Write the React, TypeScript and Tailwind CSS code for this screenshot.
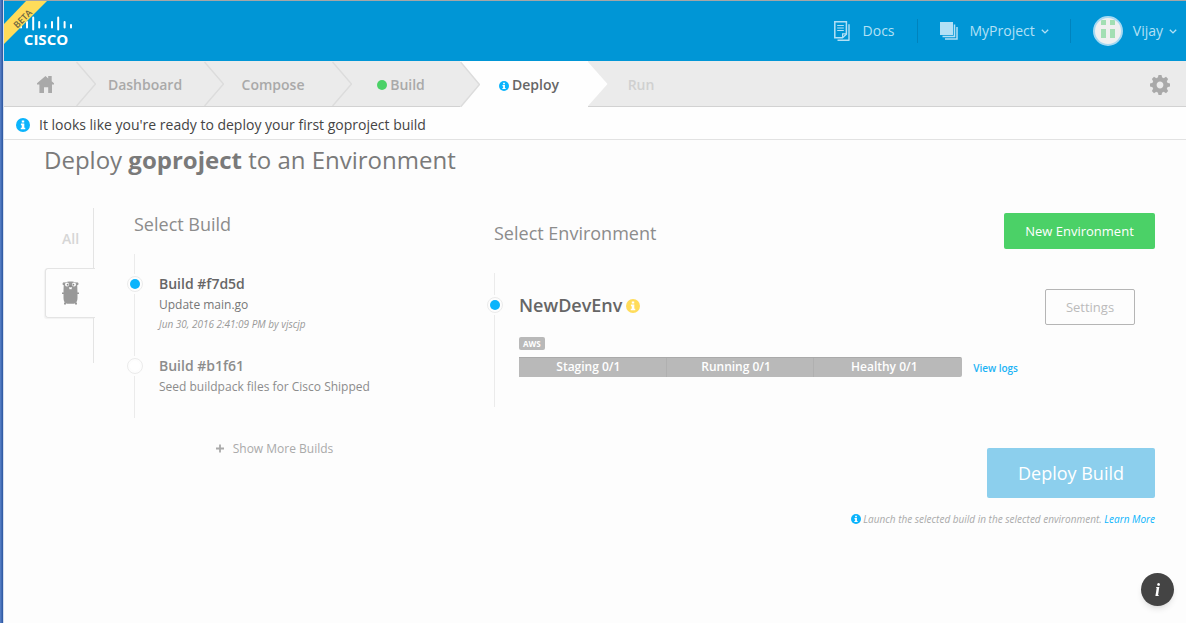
import React from "react";

type IconProps = { className?: string };

function InfoIcon({ className = "" }: IconProps) {
  return (
    <svg viewBox="0 0 16 16" className={"shrink-0 " + className} aria-hidden="true">
      <circle cx="8" cy="8" r="8" fill="currentColor" />
      <path d="M6.6 2.8h2.8v2.4H6.6zM5.6 6.4h3.9v4.6h1.1v1.9h-5.2V11h1.2V8.2h-1z" fill="#fff" />
    </svg>
  );
}

function HomeIcon() {
  return (
    <svg viewBox="0 0 17 17" className="h-[17px] w-[17px]" aria-hidden="true">
      <path
        d="M8.5 0 0 7.2V8.4h2.4V17H7v-5.8h4.2V17h3.8V8.4h2V7.2l-2.3-1.9V0h-3.5v2.4z"
        fill="#a9a9a9"
      />
    </svg>
  );
}

function GearIcon() {
  const teeth = [0, 45, 90, 135, 180, 225, 270, 315];
  return (
    <svg viewBox="-10 -10 20 20" className="h-5 w-5" aria-hidden="true">
      <circle r="5.6" fill="none" stroke="#a9a9a9" strokeWidth="4.4" />
      {teeth.map((a) => (
        <path key={a} d="M-2.3 -7 -1.5 -10h3L2.3 -7z" fill="#a9a9a9" transform={`rotate(${a})`} />
      ))}
    </svg>
  );
}

function DocsIcon() {
  return (
    <svg viewBox="0 0 17 20" className="h-5 w-[17px]" fill="none" stroke="#b3e0f5" aria-hidden="true">
      <path d="M.8.8h11.6v12.4l-4 3.6H.8z" strokeWidth="1.5" />
      <path d="M12.4 12.8H8.6v4" strokeWidth="1.2" />
      <path d="M3.2 4.5h6.6M3.2 7h6.6M3.2 9.5h6.6" strokeWidth="1.2" />
      <path d="M15 3.2v16M3.5 19.2h12" strokeWidth="1.4" />
    </svg>
  );
}

function ProjectIcon() {
  return (
    <svg viewBox="0 0 18 18" className="h-[18px] w-[18px]" aria-hidden="true">
      <path d="M0 0h13v13H0z" fill="#b3e0f5" />
      <path d="M14.5 2.5v12H2.5M17 5v12H5" fill="none" stroke="#b3e0f5" strokeWidth="1.5" />
    </svg>
  );
}

function Caret() {
  return (
    <svg viewBox="0 0 8 5" className="mt-px h-[5px] w-2" aria-hidden="true">
      <path d="M.8.8 4 3.9 7.2.8" fill="none" stroke="#b3e0f5" strokeWidth="1.4" />
    </svg>
  );
}

function Avatar() {
  return (
    <svg viewBox="0 0 30 30" className="h-[30px] w-[30px]" aria-hidden="true">
      <circle cx="15" cy="15" r="14" fill="#f0f0f0" stroke="#a6d9f2" strokeWidth="2" />
      <path d="M9 4h4v5H8V4.6zM17 4h4l1 .6V9h-5zM8 13h5v9H8zM17 13h5v9h-5z" fill="#a3dfb3" />
    </svg>
  );
}

function CiscoBars() {
  return (
    <svg viewBox="0 0 54 15" className="h-[15px] w-[54px]" aria-hidden="true">
      <g stroke="#fff" strokeWidth="2" strokeLinecap="round">
        <path d="M2 9v2.5M8 6v5.5M14.2 1.5v12M20.2 6v5.5M26.6 9v2.5M33 6v5.5M39.2 1.5v12M45.6 6v5.5M52 9v2.5" />
      </g>
    </svg>
  );
}

function BetaRibbon() {
  return (
    <svg viewBox="0 0 44 44" className="absolute left-0 top-0 h-11 w-11">
      <path d="M0 23 22 0h21L0 43z" fill="#ffdc5a" />
      <text
        x="0"
        y="0"
        transform="translate(21 20) rotate(-45)"
        textAnchor="middle"
        className="text-[9px] font-semibold"
        fill="#6b6440"
      >
        BETA
      </text>
    </svg>
  );
}

function GopherIcon() {
  return (
    <svg viewBox="0 0 17 24" className="h-6 w-[17px]" aria-hidden="true">
      <g fill="#999">
        <circle cx="2" cy="2.8" r="1.5" />
        <circle cx="15" cy="2.8" r="1.5" />
        <path d="M3 1.5C5.5 0 11.5 0 14 1.5 15.6 3 15.300 7 15.500 11v6c0 3-1 5-3.500 5.800H5C2.500 22 1.500 20 1.500 17v-6C1.700 7 1.400 3 3 1.500z" />
        <path d="M0 11.500h17v1.500H0zM2 21.500h2v2H2zM13 21.500h2v2h-2z" />
      </g>
      <circle cx="5" cy="3.600" r="2" fill="#fff" />
      <circle cx="12" cy="3.600" r="2" fill="#fff" />
      <circle cx="5.600" cy="3.700" r=".9" fill="#888" />
      <circle cx="11.400" cy="3.700" r=".9" fill="#888" />
      <path d="M7.300 6h2.400v2.200H7.300z" fill="#fff" />
      <circle cx="8.500" cy="5.300" r="1.100" fill="#888" />
    </svg>
  );
}

function StepArrow({
  left,
  right,
  line,
  className = "h-full",
}: {
  left: string;
  right: string;
  line: string;
  className?: string;
}) {
  return (
    <svg viewBox="0 0 20 45" preserveAspectRatio="none" className={"w-5 shrink-0 " + className} aria-hidden="true">
      <path d="M0 0h20v45H0z" fill={right} />
      <path d="M0 1 19.500 23 0 45z" fill={left} />
      <path d="M.5 1 19.500 23 .5 45" fill="none" stroke={line} strokeWidth="1.500" />
    </svg>
  );
}

function Step({ children, className = "" }: { children: React.ReactNode; className?: string }) {
  return (
    <a
      href="#"
      className={
        "flex w-[108px] shrink-0 items-center justify-center gap-[3px] pr-[10px] pt-[2px] text-sm font-semibold " +
        className
      }
    >
      {children}
    </a>
  );
}

function Rail({ selected, label, name, lead }: { selected: boolean; label: string; name: string; lead: string }) {
  return (
    <div className="flex w-4 shrink-0 flex-col">
      <div className={"ml-[7px] w-px bg-[#ebebeb] " + lead} />
      <input
        type="radio"
        name={name}
        aria-label={label}
        defaultChecked={selected}
        className="my-[2px] h-4 w-4 appearance-none rounded-full border border-[#ebebeb] bg-white bg-clip-content p-[2px] checked:bg-[#0bb4fc]"
      />
      <div className="ml-[7px] w-px flex-1 bg-[#ebebeb]" />
    </div>
  );
}

const stages = ["Staging 0/1", "Running 0/1", "Healthy 0/1"];

export default function App() {
  return (
    <div className="flex min-h-screen bg-[#fdfdfd] font-['Open_Sans',sans-serif] text-[#666]">
      <div className="w-1 shrink-0 border-r border-[#d5deee] bg-linear-to-r from-[#5b83c9] to-[#2a559f]" />
      <div className="min-w-0 flex-1">
        <header className="relative flex h-[61px] items-center justify-between border-t border-[#a6a6a6] bg-[#0096d6] pr-[9px] text-sm text-[#b3e0f5]">
          <a href="#" className="flex flex-col items-center pl-[15px] pt-[2px] text-white">
            <CiscoBars />
            <span className="text-[15px] font-bold leading-[17px]">CISCO</span>
          </a>
          <BetaRibbon />
          <div className="flex items-center">
            <a href="#" className="flex items-center gap-3">
              <DocsIcon />
              Docs
            </a>
            <span className="ml-[22px] h-6 w-px bg-[#0083bd]" />
            <button type="button" className="ml-[22px] flex items-center">
              <ProjectIcon />
              <span className="ml-3 mr-[6px]">MyProject</span>
              <Caret />
            </button>
            <span className="ml-[21px] h-6 w-px bg-[#0083bd]" />
            <button type="button" className="ml-[22px] flex items-center">
              <Avatar />
              <span className="ml-[10px] mr-[6px]">Vijay</span>
              <Caret />
            </button>
          </div>
        </header>

        <nav className="flex h-[46px] justify-between border-b border-[#d2d2d2] bg-[#ebebeb] text-[#a9a9a9]">
          <div className="flex">
            <a href="#" aria-label="Home" className="flex w-[72px] items-center justify-center pl-[10px] pt-[2px]">
              <HomeIcon />
            </a>
            <StepArrow left="#ebebeb" right="#ebebeb" line="#dcdcdc" />
            <Step>Dashboard</Step>
            <StepArrow left="#ebebeb" right="#ebebeb" line="#dcdcdc" />
            <Step>Compose</Step>
            <StepArrow left="#ebebeb" right="#ebebeb" line="#dcdcdc" />
            <Step>
              <span className="h-[10px] w-[10px] rounded-full bg-[#4bd167]" />
              Build
            </Step>
            <StepArrow left="#ebebeb" right="#fefefe" line="#dcdcdc" className="h-[46px]" />
            <Step className="-mb-px bg-[#fefefe] text-[#666]">
              <InfoIcon className="mt-[2px] h-[10px] w-[10px] text-[#0bb4fc]" />
              Deploy
            </Step>
            <StepArrow left="#fefefe" right="#ebebeb" line="none" />
            <span className="flex w-[66px] items-center justify-center pt-[2px] text-sm font-semibold text-[#d0d0d0]">
              Run
            </span>
          </div>
          <button type="button" aria-label="Settings" className="mr-4 pt-[2px]">
            <GearIcon />
          </button>
        </nav>

        <div className="flex h-[33px] items-center gap-[9px] border-b border-[#e2e2e2] bg-[#fefefe] pl-3 pt-[3px] text-sm text-[#444]">
          <InfoIcon className="h-[14px] w-[14px] text-[#0bb4fc]" />
          <p>It looks like you're ready to deploy your first goproject build</p>
        </div>

        <main className="pl-10 pr-[31px] pt-1">
          <h1 className="text-2xl leading-8 text-[#7a7a7a]">
            Deploy <strong className="font-bold">goproject</strong> to an Environment
          </h1>

          <div className="mt-8 flex items-start">
            <div className="flex w-[51px] shrink-0 flex-col">
              <button
                type="button"
                className="mr-px h-[60px] border-r border-[#e4e4e4] pl-1 pt-[2px] text-sm font-semibold text-[#d6d6d6]"
              >
                All
              </button>
              <button
                type="button"
                aria-label="Go"
                className="ml-px flex h-[50px] items-center justify-center rounded-l-[3px] border border-r-0 border-[#e4e4e4] shadow-[-1px_1px_1px_#f2f2f2]"
              >
                <GopherIcon />
              </button>
              <div className="mr-px h-[45px] border-r border-[#e4e4e4]" />
            </div>

            <section className="ml-[39px] w-[280px] shrink-0 pt-1">
              <h2 className="text-lg leading-6 text-[#8c8c8c]">Select Build</h2>
              <ul className="-ml-[7px] mt-[18px]">
                <li className="flex h-[82px] gap-4">
                  <Rail selected label="Build #f7d5d" name="build" lead="h-5" />
                  <div className="pt-5">
                    <h3 className="text-sm font-semibold text-[#666]">Build #f7d5d</h3>
                    <p className="text-xs leading-[22px] text-[#777]">Update main.go</p>
                    <p className="text-[10px] italic leading-4 text-[#999]">
                      Jun 30, 2016 2:41:09 PM by vjscjp
                    </p>
                  </div>
                </li>
                <li className="flex h-[82px] gap-4">
                  <Rail selected={false} label="Build #b1f61" name="build" lead="h-5" />
                  <div className="pt-5">
                    <h3 className="text-sm font-semibold text-[#8c8c8c]">Build #b1f61</h3>
                    <p className="text-xs leading-[22px] text-[#8c8c8c]">Seed buildpack files for Cisco Shipped</p>
                  </div>
                </li>
              </ul>
              <button
                type="button"
                className="mx-auto mt-5 flex items-center gap-2 text-xs leading-[22px] text-[#aaa]"
              >
                <svg viewBox="0 0 10 10" className="h-[10px] w-[10px]" aria-hidden="true">
                  <path d="M5 .5v8M1 4.500h8" stroke="#aaa" strokeWidth="1.800" />
                </svg>
                Show More Builds
              </button>
            </section>

            <section className="ml-20 min-w-0 flex-1 pt-[5px]">
              <div className="flex items-center justify-between">
                <h2 className="pt-1 text-lg text-[#8c8c8c]">Select Environment</h2>
                <button
                  type="button"
                  className="h-9 w-[151px] rounded-[2px] bg-[#4bd167] pt-px text-[13px] font-medium text-white"
                >
                  New Environment
                </button>
              </div>

              <div className="-ml-[7px] mt-6 flex gap-4">
                <Rail selected label="NewDevEnv" name="environment" lead="h-[22px]" />
                <div className="min-w-0 flex-1 pb-[30px] pt-4">
                  <div className="flex h-9 justify-between pr-5">
                    <h3 className="flex items-center gap-1 pb-1 text-lg font-semibold text-[#666]">
                      NewDevEnv
                      <InfoIcon className="mt-[2px] h-[14px] w-[14px] text-[#ffdc5a]" />
                    </h3>
                    <button
                      type="button"
                      className="h-9 w-[90px] rounded-[2px] border border-[#b5b5b5] pt-px text-[13px] text-[#bbb]"
                    >
                      Settings
                    </button>
                  </div>
                  <div className="mt-3 flex">
                    <span className="rounded-[2px] bg-[#b9b9b9] px-1 text-[8px] font-bold leading-[13px] text-white">
                      AWS
                    </span>
                  </div>
                  <div className="mt-[7px] flex items-center gap-[11px] pr-[137px]">
                    <div className="grid h-5 flex-1 grid-cols-3 divide-x divide-[#b0b0b0] rounded-r-[2px] border-t border-[#aaa] bg-[#b9b9b9] text-center text-xs font-semibold leading-[18px] text-white">
                      {stages.map((stage) => (
                        <span key={stage} className="pr-2">
                          {stage}
                        </span>
                      ))}
                    </div>
                    <a href="#" className="shrink-0 pt-[2px] text-[10px] font-semibold leading-4 text-[#1cb3f5]">
                      View logs
                    </a>
                  </div>
                </div>
              </div>

              <div className="mt-[41px] flex flex-col items-end">
                <button type="button" className="h-[50px] w-[168px] rounded-[2px] bg-[#8ccfed] text-lg font-medium text-white">
                  Deploy Build
                </button>
                <p className="mt-[13px] flex items-center gap-[2px] text-[10px] italic leading-4 text-[#aaa]">
                  <InfoIcon className="h-[10px] w-[10px] text-[#0bb4fc]" />
                  <span>
                    Launch the selected build in the selected environment.{" "}
                    <a href="#" className="text-[#0bb4fc]">
                      Learn More
                    </a>
                  </span>
                </p>
              </div>
            </section>
          </div>
        </main>
      </div>

      <button
        type="button"
        aria-label="Help"
        className="fixed bottom-[17px] right-3 h-[33px] w-[33px] rounded-full bg-[#444] font-['Liberation_Serif',serif] text-lg font-bold italic text-white shadow-md"
      >
        i
      </button>
    </div>
  );
}
